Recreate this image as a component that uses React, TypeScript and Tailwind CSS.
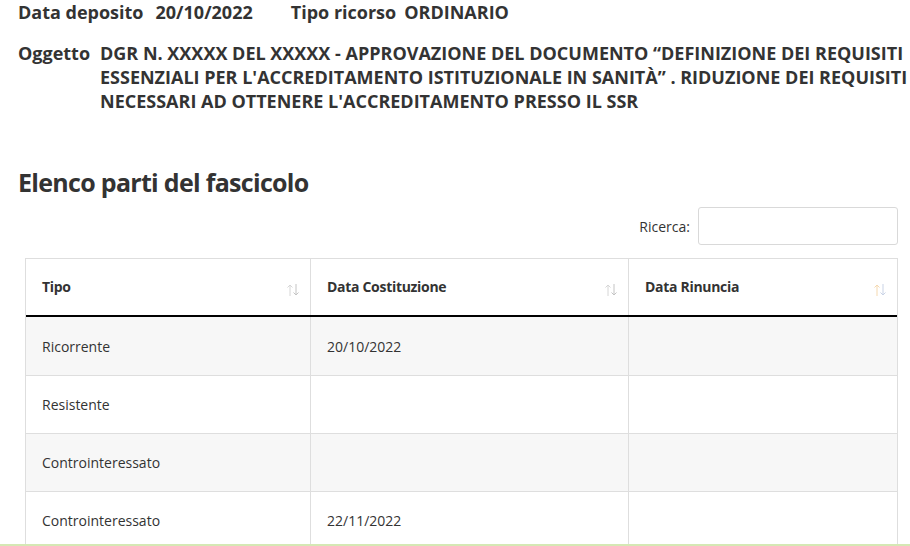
import { useState } from 'react'

const rows = [
  { tipo: 'Ricorrente', costituzione: '20/10/2022', rinuncia: '' },
  { tipo: 'Resistente', costituzione: '', rinuncia: '' },
  { tipo: 'Controinteressato', costituzione: '', rinuncia: '' },
  { tipo: 'Controinteressato', costituzione: '22/11/2022', rinuncia: '' },
]

const columns = [
  { label: 'Tipo', width: 'w-[285px]', tint: false },
  { label: 'Data Costituzione', width: 'w-[318px]', tint: false },
  { label: 'Data Rinuncia', width: 'flex-1', tint: true },
]

const oggetto = [
  'DGR N. XXXXX DEL XXXXX - APPROVAZIONE DEL DOCUMENTO “DEFINIZIONE DEI REQUISITI',
  "ESSENZIALI PER L'ACCREDITAMENTO ISTITUZIONALE IN SANITÀ” . RIDUZIONE DEI REQUISITI",
  "NECESSARI AD OTTENERE L'ACCREDITAMENTO PRESSO IL SSR",
]

function SortArrows({ tint }: { tint: boolean }) {
  return (
    <svg width="16" height="16" viewBox="0 0 16 16" fill="none" className="shrink-0">
      <path d="M5 14V3M2.5 5.5 5 3l2.5 2.5" stroke={tint ? '#f5d9b0' : '#d6d6d6'} strokeWidth="1" />
      <path d="M11 2v11M8.5 10.5 11 13l2.5-2.5" stroke={tint ? '#c9d3e6' : '#c4c4c4'} strokeWidth="1" />
    </svg>
  )
}

export default function App() {
  const [search, setSearch] = useState('')

  return (
    <div className="w-[910px] h-[546px] overflow-hidden bg-white text-[#333] font-['Open_Sans',sans-serif] relative">
      <div className="pl-[18px] pr-[12px]">
        {/* Testata ricorso */}
        <div className="flex items-center h-[24px] text-[18px] font-bold leading-[24px]">
          <span>Data deposito</span>
          <span className="ml-[12px]">20/10/2022</span>
          <span className="ml-[38px]">Tipo ricorso</span>
          <span className="ml-[8px]">ORDINARIO</span>
        </div>

        <div className="flex mt-[17px] text-[18px] font-bold leading-[24px]">
          <span className="w-[82px] shrink-0">Oggetto</span>
          <div className="whitespace-nowrap">
            {oggetto.map(line => (
              <p key={line}>{line}</p>
            ))}
          </div>
        </div>

        <h2 className="mt-[53px] text-[25px] font-bold tracking-[-0.7px] leading-[32px]">Elenco parti del fascicolo</h2>

        {/* Ricerca */}
        <div className="flex justify-end items-center gap-[8px] mt-[9px]">
          <label className="text-[14px]">Ricerca:</label>
          <input
            value={search}
            onChange={e => setSearch(e.target.value)}
            className="w-[200px] h-[38px] border border-[#d9d9d9] rounded-[3px] px-2 text-sm outline-none"
          />
        </div>

        {/* Tabella */}
        <div className="ml-[7px] mt-[13px] border-l border-r border-t border-[#dedede]">
          <div className="flex h-[58px] border-b-2 border-black">
            {columns.map((c, i) => (
              <div
                key={c.label}
                className={`${c.width} flex items-center justify-between pl-[16px] pr-[9px] ${i < 2 ? 'border-r border-[#dedede]' : ''}`}
              >
                <span className="text-[14px] font-bold tracking-[-0.3px] -mt-[2px]">{c.label}</span>
                <span className="mt-[6px]"><SortArrows tint={c.tint} /></span>
              </div>
            ))}
          </div>
          {rows.map((r, idx) => (
            <div
              key={idx}
              className={`flex h-[58px] text-[14px] ${idx % 2 === 0 ? 'bg-[#f7f7f7]' : 'bg-white'} ${idx > 0 ? 'border-t border-[#dedede]' : ''}`}
            >
              <div className="w-[285px] flex items-center pl-[16px] border-r border-[#dedede]">{r.tipo}</div>
              <div className="w-[318px] flex items-center pl-[16px] border-r border-[#dedede]">{r.costituzione}</div>
              <div className="flex-1 flex items-center pl-[16px]">{r.rinuncia}</div>
            </div>
          ))}
        </div>
      </div>
      <div className="absolute left-0 right-0 bottom-0 h-[2px] bg-[#d5e8b4]" />
    </div>
  )
}
